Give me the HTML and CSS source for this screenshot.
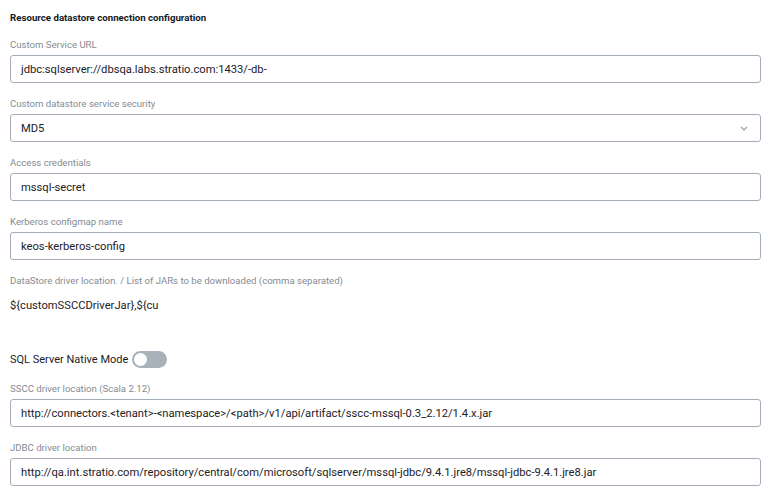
FILE: index.html
```html
<!DOCTYPE html>
<html>
<head>
<meta charset="utf-8">
<link rel="stylesheet" href="styles.css">
</head>
<body>
<div class="form">
  <h3 class="title">Resource datastore connection configuration</h3>

  <div class="field">
    <label class="label">Custom Service URL</label>
    <div class="input">jdbc:sqlserver://dbsqa.labs.stratio.com:1433/-db-</div>
  </div>

  <div class="field">
    <label class="label">Custom datastore service security</label>
    <div class="input select">
      <span>MD5</span>
      <svg class="chevron" width="8" height="5" viewBox="0 0 8 5"><path d="M1 1 L4 4 L7 1" fill="none" stroke="#8c99a8" stroke-width="1.1"/></svg>
    </div>
  </div>

  <div class="field">
    <label class="label">Access credentials</label>
    <div class="input">mssql-secret</div>
  </div>

  <div class="field">
    <label class="label">Kerberos configmap name</label>
    <div class="input">keos-kerberos-config</div>
  </div>

  <div class="field">
    <label class="label">DataStore driver location. / List of JARs to be downloaded (comma separated)</label>
    <div class="plain">${customSSCCDriverJar},${cu</div>
  </div>

  <div class="toggle-row">
    <span class="toggle-label">SQL Server Native Mode</span>
    <span class="toggle"><span class="knob"></span></span>
  </div>

  <div class="field">
    <label class="label">SSCC driver location (Scala 2.12)</label>
    <div class="input">http://connectors.&lt;tenant&gt;-&lt;namespace&gt;/&lt;path&gt;/v1/api/artifact/sscc-mssql-0.3_2.12/1.4.x.jar</div>
  </div>

  <div class="field">
    <label class="label">JDBC driver location</label>
    <div class="input">http://qa.int.stratio.com/repository/central/com/microsoft/sqlserver/mssql-jdbc/9.4.1.jre8/mssql-jdbc-9.4.1.jre8.jar</div>
  </div>
</div>
</body>
</html>
```

FILE: styles.css
```css
* { box-sizing: border-box; }
html, body { margin: 0; padding: 0; background: #ffffff; }
body {
  font-family: Roboto, "Liberation Sans", sans-serif;
  color: #1d2127;
}
.form {
  padding: 11px 10px 0 10px;
  width: 771px;
}
.title {
  margin: 0 0 13px 0;
  font-size: 9.7px;
  line-height: 14px;
  font-weight: 700;
  color: #14181d;
}
.field {
  margin-bottom: 14px;
}
.label {
  display: block;
  font-size: 9.6px;
  line-height: 14px;
  color: #858b93;
  margin-bottom: 3px;
}
.input {
  height: 28px;
  border: 1px solid #a3adb8;
  border-radius: 3px;
  padding: 0 10px;
  display: flex;
  align-items: center;
  font-size: 11.2px;
  color: #1d2127;
  white-space: nowrap;
  overflow: hidden;
}
.select {
  justify-content: space-between;
}
.chevron {
  margin-right: 2px;
}
.plain {
  height: 28px;
  width: 152px;
  display: flex;
  align-items: center;
  font-size: 11.2px;
  white-space: nowrap;
  color: #1d2127;
}
.toggle-row {
  display: flex;
  align-items: center;
  gap: 4px;
  margin-top: 32px;
  margin-bottom: 14px;
  height: 17px;
}
.toggle-label {
  font-size: 11px;
  color: #1d2127;
}
.toggle {
  width: 35px;
  height: 17px;
  border-radius: 9px;
  background: #a9b1bb;
  position: relative;
  display: inline-block;
}
.knob {
  position: absolute;
  left: 2px;
  top: 2px;
  width: 13px;
  height: 13px;
  border-radius: 50%;
  background: #ffffff;
}
```
